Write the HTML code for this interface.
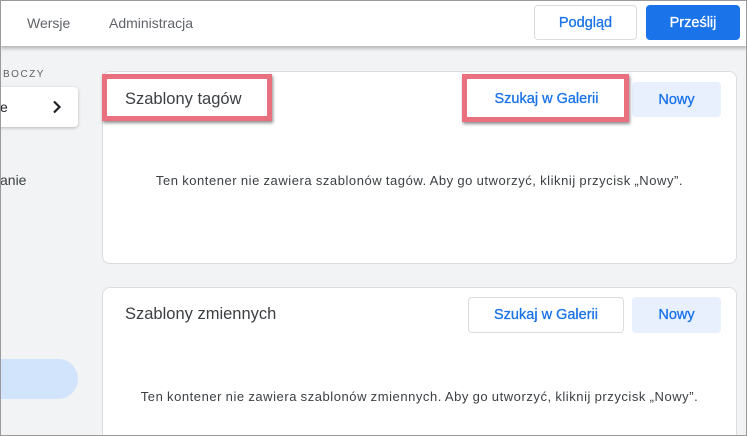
<!DOCTYPE html>
<html><head><meta charset="utf-8"><style>
*{box-sizing:border-box;margin:0;padding:0}
html,body{width:747px;height:436px;overflow:hidden}
body{background:#f1f3f4;font-family:"Liberation Sans",Arial,sans-serif;position:relative;color:#202124}
.frame{position:absolute;left:0;top:0;width:747px;height:436px;border:1px solid #9a9a9a;z-index:50;pointer-events:none}
.hdr{position:absolute;left:0;top:0;width:747px;height:46px;background:#fff;box-shadow:0 2px 4px rgba(0,0,0,.3);z-index:10}
.a{position:absolute;font-size:14px;color:#5f6368}
.btn{position:absolute;border-radius:4px;font-size:14.5px;color:#1a73e8;display:flex;align-items:center;justify-content:center;-webkit-text-stroke:0.3px currentColor}
.card{position:absolute;left:102px;width:635px;background:#fff;border:1px solid #dadce0;border-radius:8px}
.title{position:absolute;font-size:16.5px;color:#3c4043}
.msg{position:absolute;left:0;width:100%;text-align:center;font-size:13px;letter-spacing:0.55px;word-spacing:-0.5px;color:#3c4043}
.red{position:absolute;border:5px solid #e8707f;box-shadow:1px 2px 3px rgba(0,0,0,.45);z-index:5}
</style></head><body>
<div class="hdr">
<div class="a" style="left:27px;top:15px">Wersje</div>
<div class="a" style="left:109px;top:15px">Administracja</div>
<div class="btn" style="left:534px;top:5px;width:103px;height:35px;border:1px solid #dadce0;background:#fff">Podgląd</div>
<div class="btn" style="left:646px;top:5px;width:94px;height:35px;background:#1a73e8;color:#fff">Prześlij</div>
</div>
<div style="position:absolute;left:3px;top:69px;font-size:10px;letter-spacing:1.5px;color:#5f6368">BOCZY</div>
<div style="position:absolute;left:-6px;top:87px;width:84px;height:40px;background:#fff;border-radius:4px;box-shadow:0 1px 3px rgba(0,0,0,.25);font-size:14px"><span style="position:absolute;left:6px;top:12px">e</span>
<svg style="position:absolute;left:58px;top:13px" width="10" height="14" viewBox="0 0 10 14"><path d="M2 1.5 L7.5 7 L2 12.5" fill="none" stroke="#202124" stroke-width="2.2"/></svg></div>
<div style="position:absolute;left:0;top:172px;font-size:14px;color:#3c4043">anie</div>
<div style="position:absolute;left:-20px;top:359px;width:98px;height:40px;background:#d2e3fc;border-radius:20px"></div>

<div class="card" style="top:71px;height:193px">
<div class="title" style="left:22px;top:18px">Szablony tagów</div>
<div class="btn" style="left:366px;top:9px;width:155px;height:36px;background:#fff">Szukaj w Galerii</div>
<div class="btn" style="left:529px;top:10px;width:89px;height:35px;background:#e8f0fe">Nowy</div>
<div class="msg" style="top:101px">Ten kontener nie zawiera szablonów tagów. Aby go utworzyć, kliknij przycisk „Nowy”.</div>
</div>
<div class="red" style="left:102px;top:74px;width:170px;height:47px"></div>
<div class="red" style="left:462px;top:74px;width:167px;height:48px"></div>

<div class="card" style="top:287px;height:160px">
<div class="title" style="left:22px;top:17px">Szablony zmiennych</div>
<div class="btn" style="left:365px;top:9px;width:156px;height:36px;border:1px solid #dadce0;background:#fff">Szukaj w Galerii</div>
<div class="btn" style="left:529px;top:9px;width:89px;height:36px;background:#e8f0fe">Nowy</div>
<div class="msg" style="top:101px">Ten kontener nie zawiera szablonów zmiennych. Aby go utworzyć, kliknij przycisk „Nowy”.</div>
</div>
<div class="frame"></div>
</body></html>
